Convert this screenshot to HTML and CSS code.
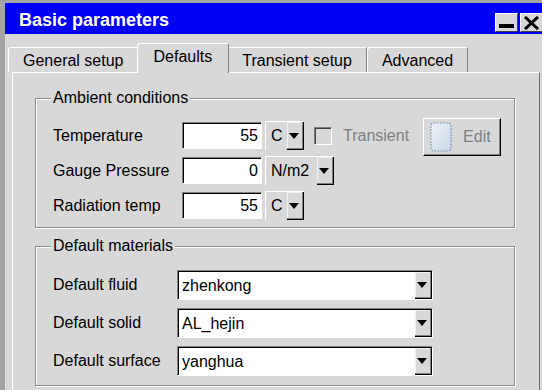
FILE: index.html
```
<!DOCTYPE html>
<html>
<head>
<meta charset="utf-8">
<title>Basic parameters</title>
<link rel="stylesheet" href="styles.css">
</head>
<body>
<div class="window">
  <div class="titlebar">
    <span class="title">Basic parameters</span>
    <div class="caption-btns">
      <span class="cap-btn"><span class="min-glyph"></span></span>
      <span class="cap-btn"><svg width="17" height="14" viewBox="0 0 17 14"><path d="M2 1 L15 13 M15 1 L2 13" stroke="#000" stroke-width="3" fill="none"/></svg></span>
    </div>
  </div>
  <div class="tabs">
    <div class="tab">General setup</div>
    <div class="tab active">Defaults</div>
    <div class="tab">Transient setup</div>
    <div class="tab">Advanced</div>
  </div>
  <div class="panel">
    <fieldset class="group">
      <legend>Ambient conditions</legend>
      <div class="rows">
        <div class="row">
          <span class="lbl w1">Temperature</span>
          <span class="field">55</span>
          <span class="unit u-short"><span class="unit-text">C</span><span class="dd"></span></span>
          <span class="check"></span>
          <span class="dis">Transient</span>
          <span class="btn-edit">
            <svg width="22" height="30" viewBox="0 0 22 30">
              <defs><linearGradient id="g" x1="0" y1="0" x2="1" y2="1"><stop offset="0" stop-color="#eef3f8"/><stop offset="1" stop-color="#c9d6e4"/></linearGradient></defs>
              <rect x="1" y="1" width="20" height="28" rx="3" fill="url(#g)" stroke="#6f8fb5" stroke-width="1.2" stroke-dasharray="1.5 1.5"/>
            </svg>
            <span class="edit-text">Edit</span>
          </span>
        </div>
        <div class="row">
          <span class="lbl w1">Gauge Pressure</span>
          <span class="field">0</span>
          <span class="unit u-long"><span class="unit-text">N/m2</span><span class="dd"></span></span>
        </div>
        <div class="row">
          <span class="lbl w1">Radiation temp</span>
          <span class="field">55</span>
          <span class="unit u-short"><span class="unit-text">C</span><span class="dd"></span></span>
        </div>
      </div>
    </fieldset>
    <fieldset class="group second">
      <legend>Default materials</legend>
      <div class="rows mrows">
        <div class="row m">
          <span class="lbl w2">Default fluid</span>
          <span class="combo"><span class="combo-text">zhenkong</span><span class="dd"></span></span>
        </div>
        <div class="row m">
          <span class="lbl w2">Default solid</span>
          <span class="combo"><span class="combo-text">AL_hejin</span><span class="dd"></span></span>
        </div>
        <div class="row m">
          <span class="lbl w2">Default surface</span>
          <span class="combo"><span class="combo-text">yanghua</span><span class="dd"></span></span>
        </div>
      </div>
    </fieldset>
  </div>
</div>
</body>
</html>
```
FILE: styles.css
```
* { box-sizing: border-box; }
html, body { margin: 0; padding: 0; overflow: hidden; }
body {
  width: 542px;
  height: 390px;
  background: #d8d8d8;
  font-family: "Liberation Sans", Arial, sans-serif;
  font-size: 16px;
  color: #000;
}
.window {
  height: 390px;
  border-top: 3px solid #a3a3a3;
  border-left: 5px solid #a3a3a3;
  background: #d8d8d8;
  overflow: hidden;
}
.titlebar {
  height: 31px;
  background: #0000f5;
  display: flex;
  align-items: center;
  padding-left: 14px;
}
.title {
  flex: 1;
  color: #fff;
  font-weight: bold;
  font-size: 18px;
  line-height: 1;
  padding-top: 3px;
}
.caption-btns {
  display: flex;
  gap: 2px;
  align-self: flex-end;
  margin-bottom: 2px;
  margin-right: -1px;
}
.cap-btn {
  width: 23px;
  height: 19px;
  background: #d8d8d8;
  border-top: 1px solid #fff;
  border-left: 1px solid #fff;
  border-right: 1px solid #404040;
  border-bottom: 1px solid #404040;
  display: flex;
  align-items: center;
  justify-content: center;
}
.min-glyph {
  width: 15px;
  height: 4px;
  background: #000;
  align-self: flex-end;
  margin-bottom: 3px;
}
.tabs {
  display: flex;
  align-items: flex-end;
  height: 38px;
  padding-left: 3px;
  position: relative;
  z-index: 1;
}
.tab {
  height: 25px;
  padding: 2px 14px 0;
  display: flex;
  align-items: center;
  border-top: 1px solid #fff;
  border-left: 1px solid #fff;
  border-right: 1px solid #808080;
  border-radius: 3px 3px 0 0;
  white-space: nowrap;
  background: #d8d8d8;
}
.tab.active {
  height: 30px;
  margin: 0 -2px -1px;
  padding: 0 16px 3px;
  position: relative;
  z-index: 2;
}
.panel {
  margin-left: 7px;
  width: 528px;
  height: 318px;
  border-top: 1px solid #fff;
  border-left: 1px solid #fff;
  border-right: 1px solid #707070;
  padding: 16px 0 0 22px;
}
.group {
  margin: 0;
  padding: 0;
  width: 480px;
  border: 1px solid #8c8c8c;
  box-shadow: inset 1px 1px 0 #fff, 1px 1px 0 #fff;
  min-width: 0;
}
.group legend {
  margin-left: 15px;
  padding: 0 2px;
  line-height: 18px;
  background: #d8d8d8;
}
.group.second { margin-top: 9px; }
.rows {
  display: flex;
  flex-direction: column;
  gap: 8px;
  padding: 15px 0 8px 17px;
}
.rows.mrows { padding-bottom: 9px; }
.row {
  display: flex;
  align-items: center;
  height: 27px;
}
.row.m { height: 30px; }
.lbl { flex: none; white-space: nowrap; }
.w1 { width: 129px; }
.w2 { width: 124px; }
.field {
  width: 80px;
  height: 27px;
  background: #fff;
  border: 1px solid;
  border-color: #808080 #fff #fff #808080;
  box-shadow: inset 1px 1px 0 #000;
  text-align: right;
  padding-right: 3px;
  line-height: 25px;
}
.unit {
  display: flex;
  height: 29px;
  margin-left: 3px;
  background: #d8d8d8;
  border-top: 1px solid #fff;
  border-left: 1px solid #fff;
}
.u-short { width: 39px; }
.u-long { width: 69px; }
.unit-text {
  flex: 1;
  padding-left: 5px;
  line-height: 27px;
}
.dd {
  flex: none;
  width: 17px;
  height: 100%;
  position: relative;
  background: #d8d8d8;
  border-right: 1px solid #000;
  border-bottom: 1px solid #000;
  box-shadow: inset -1px -1px 0 #808080, inset 1px 1px 0 #f0f0f0;
}
.dd::after {
  content: "";
  position: absolute;
  left: 50%;
  top: 50%;
  margin: -3px 0 0 -6px;
  border-left: 5px solid transparent;
  border-right: 5px solid transparent;
  border-top: 6px solid #000;
}
.check {
  width: 18px;
  height: 18px;
  margin-left: 10px;
  border: 1px solid;
  border-color: #808080 #fff #fff #808080;
  box-shadow: inset 1px 1px 0 #404040;
  background: #d8d8d8;
}
.dis {
  margin-left: 11px;
  color: #808080;
}
.btn-edit {
  align-self: flex-start;
  margin-top: -4px;
  margin-left: 14px;
  width: 78px;
  height: 38px;
  display: flex;
  align-items: center;
  padding-left: 6px;
  gap: 11px;
  border: 1px solid;
  border-color: #fff #000 #000 #fff;
  box-shadow: inset -1px -1px 0 #808080;
  background: #d8d8d8;
}
.btn-edit svg { flex: none; }
.edit-text { color: #808080; }
.combo {
  display: flex;
  width: 256px;
  height: 30px;
  background: #fff;
  border: 1px solid;
  border-color: #808080 #fff #fff #808080;
  box-shadow: inset 1px 1px 0 #000;
}
.combo-text {
  flex: 1;
  padding-left: 4px;
  line-height: 29px;
}
.combo .dd {
  margin-top: 1px;
  height: auto;
}
```
